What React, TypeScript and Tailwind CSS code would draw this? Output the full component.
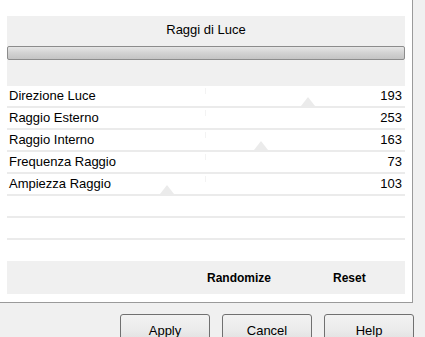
import React from 'react';

const rows = [
  { label: 'Direzione Luce', value: 193, thumb: 308 },
  { label: 'Raggio Esterno', value: 253, thumb: null },
  { label: 'Raggio Interno', value: 163, thumb: 261 },
  { label: 'Frequenza Raggio', value: 73, thumb: null },
  { label: 'Ampiezza Raggio', value: 103, thumb: 167 },
];

function Thumb({ x }: { x: number }) {
  // faint slider thumb sitting on the row's bottom line
  return (
    <svg
      className="absolute bottom-0"
      style={{ left: x - 7 - 7 }}
      width="14"
      height="9"
      viewBox="0 0 14 9"
    >
      <polygon points="7,0 14,9 0,9" fill="#ebebeb" />
    </svg>
  );
}

function DialogButton({ children }: { children: React.ReactNode }) {
  return (
    <button className="w-[90px] h-[32px] rounded-[3px] border border-[#707070] bg-gradient-to-b from-[#f2f2f2] via-[#ebebeb] to-[#dcdcdc] text-[13px] text-black pt-[1px]">
      {children}
    </button>
  );
}

export default function App() {
  return (
    <div className="w-[425px] h-[337px] bg-[#f0f0f0] overflow-hidden text-black font-['Liberation_Sans',Arial,sans-serif]">
      <div className="w-[413px] h-[303px] bg-white border-r border-b border-[#9a9a9a] pt-[16px] pl-[7px] pr-[7px]">
        {/* header */}
        <div className="h-[70px] bg-[#f0f0f0] flex flex-col">
          <div className="h-[30px] pt-[6px] text-center text-[13px] leading-[16px]">Raggi di Luce</div>
          <div className="h-[14px] rounded-[2px] border border-[#8c8c8c] bg-gradient-to-b from-[#e6e6e6] via-[#d2d2d2] to-[#c4c4c4]" />
        </div>

        {/* sliders */}
        <div className="flex flex-col">
          {rows.map((r) => (
            <div
              key={r.label}
              className="relative h-[22px] border-b-2 border-[#ebebeb] flex items-center justify-between pl-[2px] pr-[3px] text-[13px]"
            >
              <span>{r.label}</span>
              <span>{r.value}</span>
              <div className="absolute left-[198px] top-[2px] w-px h-[6px] bg-[#f3f3f3]" />
              {r.thumb !== null && <Thumb x={r.thumb} />}
            </div>
          ))}
          <div className="h-[22px] border-b-2 border-[#ebebeb]" />
          <div className="h-[22px] border-b-2 border-[#ebebeb]" />
        </div>

        {/* bottom actions */}
        <div className="mt-[21px] h-[33px] bg-[#f0f0f0] flex items-center text-[12px] font-bold">
          <span className="ml-[200px]">Randomize</span>
          <span className="ml-[62px]">Reset</span>
        </div>
      </div>

      <div className="flex gap-[12px] pl-[120px] pt-[11px]">
        <DialogButton>Apply</DialogButton>
        <DialogButton>Cancel</DialogButton>
        <DialogButton>Help</DialogButton>
      </div>
    </div>
  );
}
